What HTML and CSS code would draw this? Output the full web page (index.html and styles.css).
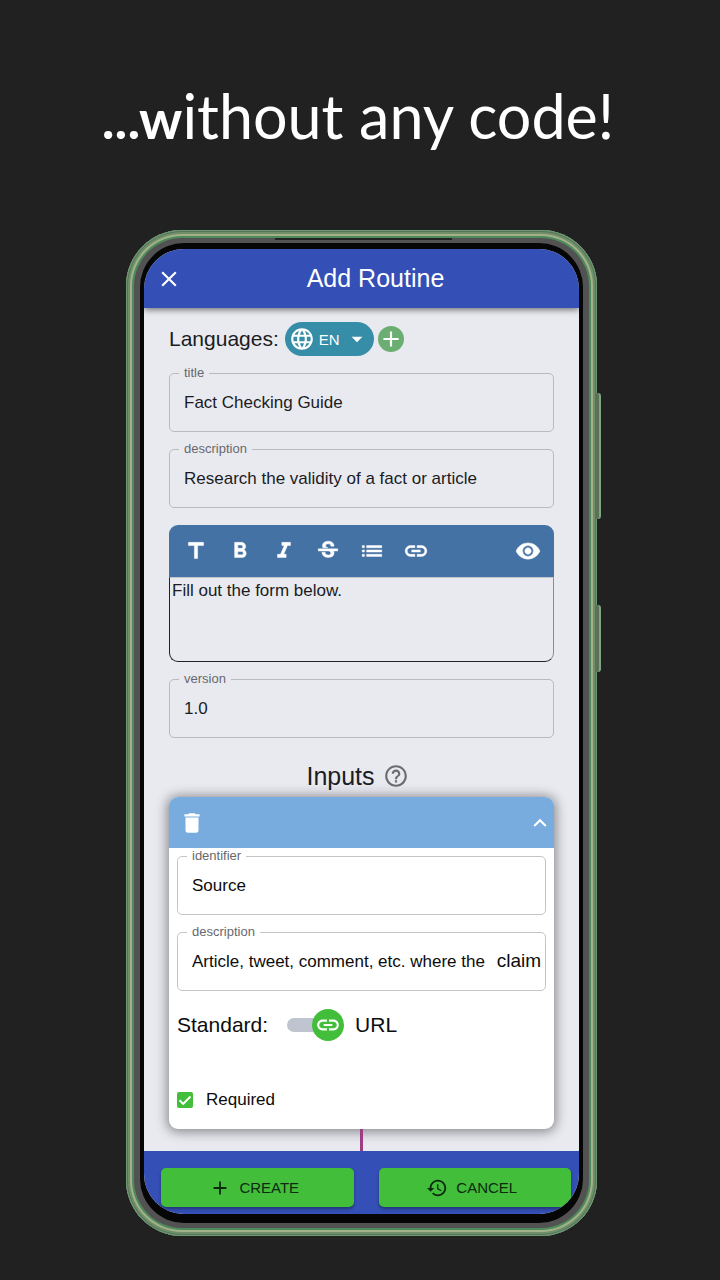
FILE: index.html
```html
<!DOCTYPE html>
<html lang="en">
<head>
<meta charset="utf-8">
<meta name="viewport" content="width=device-width, initial-scale=1">
<title>Add Routine</title>
<link rel="stylesheet" href="styles.css">
</head>
<body>
<h1 class="headline"><b>...w</b>ithout any code!</h1>
<div class="phone">
  <span class="side-key key-volume"></span>
  <span class="side-key key-power"></span>
  <div class="rim">
    <span class="speaker"></span>
    <div class="bezel">
      <main class="screen">
        <header class="topbar">
          <button class="icon-btn" type="button" aria-label="Close">
            <svg class="icon" viewBox="0 0 24 24"><path d="M19 6.41 17.59 5 12 10.59 6.41 5 5 6.41 10.59 12 5 17.59 6.41 19 12 13.41 17.59 19 19 17.59 13.41 12z"/></svg>
          </button>
          <h2 class="topbar-title">Add Routine</h2>
        </header>

        <form class="content">
          <div class="languages">
            <span class="large-text">Languages:</span>
            <button class="lang-pill" type="button">
              <svg class="icon" viewBox="0 0 24 24"><path d="M11.99 2C6.47 2 2 6.48 2 12s4.47 10 9.99 10C17.52 22 22 17.52 22 12S17.52 2 11.99 2zm6.93 6h-2.95c-.32-1.25-.78-2.45-1.38-3.56 1.84.63 3.37 1.91 4.33 3.56zM12 4.04c.83 1.2 1.48 2.53 1.91 3.96h-3.82c.43-1.43 1.08-2.76 1.91-3.96zM4.26 14C4.1 13.36 4 12.69 4 12s.1-1.36.26-2h3.38c-.08.66-.14 1.32-.14 2s.06 1.34.14 2H4.26zm.82 2h2.95c.32 1.25.78 2.45 1.38 3.56-1.84-.63-3.37-1.9-4.33-3.56zm2.95-8H5.08c.96-1.66 2.49-2.93 4.33-3.56C8.81 5.55 8.35 6.75 8.03 8zM12 19.96c-.83-1.2-1.48-2.53-1.91-3.96h3.82c-.43 1.43-1.08 2.76-1.91 3.96zM14.34 14H9.66c-.09-.66-.16-1.32-.16-2s.07-1.35.16-2h4.68c.09.65.16 1.32.16 2s-.07 1.34-.16 2zm.25 5.56c.6-1.11 1.06-2.31 1.38-3.56h2.95c-.96 1.65-2.49 2.93-4.33 3.56zM16.36 14c.08-.66.14-1.32.14-2s-.06-1.34-.14-2h3.38c.16.64.26 1.31.26 2s-.1 1.36-.26 2h-3.38z"/></svg>
              <span>EN</span>
              <svg class="icon" viewBox="0 0 24 24"><path d="m7 10 5 5 5-5z"/></svg>
            </button>
            <button class="add-lang" type="button" aria-label="Add language">
              <svg class="icon" viewBox="0 0 24 24"><path d="M19 13h-6v6h-2v-6H5v-2h6V5h2v6h6v2z"/></svg>
            </button>
          </div>

          <fieldset class="field">
            <legend><label for="title">title</label></legend>
            <input id="title" type="text" value="Fact Checking Guide">
          </fieldset>
          <fieldset class="field">
            <legend><label for="description">description</label></legend>
            <input id="description" type="text" value="Research the validity of a fact or article">
          </fieldset>

          <div class="editor">
            <div class="toolbar">
              <button class="icon-btn" type="button" aria-label="Header"><svg class="icon" viewBox="0 0 24 24"><path d="M5 4v3h5.500v12h3V7H19V4z"/></svg></button>
              <button class="icon-btn" type="button" aria-label="Bold"><svg class="icon" viewBox="0 0 24 24"><path d="M15.600 10.790c.97-.67 1.650-1.770 1.650-2.790 0-2.260-1.750-4-4-4H7v14h7.040c2.090 0 3.710-1.700 3.710-3.790 0-1.520-.86-2.820-2.150-3.420zM10 6.500h3c.83 0 1.500.67 1.500 1.500s-.67 1.500-1.500 1.500h-3v-3zm3.500 9H10v-3h3.500c.83 0 1.500.67 1.500 1.500s-.67 1.500-1.500 1.500z"/></svg></button>
              <button class="icon-btn" type="button" aria-label="Italic"><svg class="icon" viewBox="0 0 24 24"><path d="M10 4v3h2.210l-3.420 8H6v3h8v-3h-2.210l3.420-8H18V4z"/></svg></button>
              <button class="icon-btn" type="button" aria-label="Strikethrough"><svg class="icon" viewBox="0 0 24 24"><path d="M6.850 7.080C6.850 4.370 9.450 3 12.240 3c1.640 0 3 .49 3.900 1.280.77.65 1.460 1.730 1.460 3.240h-3.010c0-.31-.05-.59-.15-.85-.29-.86-1.200-1.280-2.250-1.280-1.860 0-2.340 1.020-2.340 1.700 0 .48.25.88.74 1.210.38.25.77.48 1.410.7H7.390c-.21-.34-.54-.89-.54-1.920zM21 12v-2H3v2h9.620c1.150.45 1.960.75 1.960 1.970 0 1-.81 1.670-2.280 1.670-1.540 0-2.930-.54-2.930-2.510H6.400c0 .55.08 1.130.24 1.580.81 2.290 3.290 3.300 5.670 3.300 2.270 0 5.300-.89 5.300-4.050 0-.3-.01-1.160-.48-1.940H21V12z"/></svg></button>
              <button class="icon-btn" type="button" aria-label="List"><svg class="icon" viewBox="0 0 24 24"><path d="M3 13h2v-2H3v2zm0 4h2v-2H3v2zm0-8h2V7H3v2zm4 4h14v-2H7v2zm0 4h14v-2H7v2zM7 7v2h14V7H7z"/></svg></button>
              <button class="icon-btn" type="button" aria-label="Link"><svg class="icon" viewBox="0 0 24 24"><path d="M3.900 12c0-1.710 1.390-3.100 3.100-3.100h4V7H7c-2.760 0-5 2.240-5 5s2.240 5 5 5h4v-1.900H7c-1.710 0-3.100-1.390-3.100-3.100zM8 13h8v-2H8v2zm9-6h-4v1.900h4c1.710 0 3.100 1.390 3.100 3.100s-1.390 3.100-3.100 3.100h-4V17h4c2.760 0 5-2.240 5-5s-2.240-5-5-5z"/></svg></button>
              <button class="icon-btn preview" type="button" aria-label="Preview"><svg class="icon" viewBox="0 0 24 24"><path d="M12 4.500C7 4.500 2.730 7.610 1 12c1.730 4.390 6 7.500 11 7.500s9.270-3.110 11-7.500c-1.730-4.390-6-7.500-11-7.500zM12 17c-2.760 0-5-2.240-5-5s2.240-5 5-5 5 2.240 5 5-2.240 5-5 5zm0-8c-1.660 0-3 1.340-3 3s1.340 3 3 3 3-1.340 3-3-1.340-3-3-3z"/></svg></button>
            </div>
            <textarea class="editor-text" aria-label="Instructions">Fill out the form below.</textarea>
          </div>

          <fieldset class="field">
            <legend><label for="version">version</label></legend>
            <input id="version" type="text" value="1.0">
          </fieldset>

          <div class="section-head">
            <h3>Inputs</h3>
            <button class="icon-btn help" type="button" aria-label="Help">
              <svg class="icon" viewBox="0 0 24 24"><path d="M11 18h2v-2h-2v2zm1-16C6.480 2 2 6.480 2 12s4.480 10 10 10 10-4.480 10-10S17.520 2 12 2zm0 18c-4.410 0-8-3.590-8-8s3.590-8 8-8 8 3.590 8 8-3.590 8-8 8zm0-14c-2.210 0-4 1.790-4 4h2c0-1.100.9-2 2-2s2 .9 2 2c0 2-3 1.750-3 5h2c0-2.250 3-2.500 3-5 0-2.210-1.790-4-4-4z"/></svg>
            </button>
          </div>

          <section class="card">
            <div class="card-head">
              <button class="icon-btn" type="button" aria-label="Delete"><svg class="icon" viewBox="0 0 24 24"><path d="M6 19c0 1.100.9 2 2 2h8c1.100 0 2-.9 2-2V7H6v12zM19 4h-3.500l-1-1h-5l-1 1H5v2h14V4z"/></svg></button>
              <button class="icon-btn" type="button" aria-label="Collapse"><svg class="icon" viewBox="0 0 24 24"><path d="m12 8-6 6 1.410 1.410L12 10.830l4.590 4.580L18 14z"/></svg></button>
            </div>
            <div class="card-body">
              <fieldset class="field">
                <legend><label for="identifier">identifier</label></legend>
                <input id="identifier" type="text" value="Source">
              </fieldset>
              <fieldset class="field">
                <legend><label for="input-description">description</label></legend>
                <div class="field-row">
                  <input id="input-description" type="text" value="Article, tweet, comment, etc. where the">
                  <span class="suffix">claim</span>
                </div>
              </fieldset>
              <div class="standard">
                <label class="large-text" for="standard">Standard:</label>
                <span class="switch">
                  <input id="standard" type="checkbox" role="switch" checked>
                  <span class="thumb"><svg class="icon" viewBox="0 0 24 24"><path d="M3.900 12c0-1.710 1.390-3.100 3.100-3.100h4V7H7c-2.760 0-5 2.240-5 5s2.240 5 5 5h4v-1.900H7c-1.710 0-3.100-1.390-3.100-3.100zM8 13h8v-2H8v2zm9-6h-4v1.900h4c1.710 0 3.100 1.390 3.100 3.100s-1.390 3.100-3.100 3.100h-4V17h4c2.760 0 5-2.240 5-5s-2.240-5-5-5z"/></svg></span>
                </span>
                <span class="large-text">URL</span>
              </div>
              <label class="required">
                <span class="check">
                  <input type="checkbox" checked>
                  <svg class="tick" viewBox="0 0 16 16"><path d="m2.500 8.200 3.700 3.700 7.300-7.400"/></svg>
                </span>
                Required
              </label>
            </div>
          </section>
          <div class="connector"></div>
        </form>

        <footer class="actions">
          <button class="action" type="button">
            <svg class="icon-small" viewBox="0 0 24 24"><path d="M19 13h-6v6h-2v-6H5v-2h6V5h2v6h6v2z"/></svg>
            CREATE
          </button>
          <button class="action" type="button">
            <svg class="icon-small" viewBox="0 0 24 24"><path d="M13 3c-4.970 0-9 4.030-9 9H1l3.890 3.890.07.14L9 12H6c0-3.870 3.130-7 7-7s7 3.130 7 7-3.130 7-7 7c-1.930 0-3.680-.79-4.940-2.060l-1.420 1.420C8.270 19.990 10.510 21 13 21c4.970 0 9-4.030 9-9s-4.030-9-9-9zm-1 5v5l4.280 2.540.72-1.210-3.500-2.080V8H12z"/></svg>
            CANCEL
          </button>
        </footer>
      </main>
    </div>
  </div>
</div>
</body>
</html>
```
FILE: styles.css
```css
* {
  box-sizing: border-box;
}

body {
  margin: 0;
  min-height: 100vh;
  background: #212121;
  color: #1b1c1f;
  font-family: "Liberation Sans", Arial, sans-serif;
  font-size: 17px;
}

button,
input,
textarea {
  margin: 0;
  font: inherit;
  color: inherit;
}

button {
  display: flex;
  align-items: center;
  justify-content: center;
  padding: 0;
  border: 0;
  background: none;
  cursor: pointer;
}

.headline {
  margin: 0;
  padding: 76px 4px 74px 0;
  color: #fff;
  font-family: Lato, sans-serif;
  font-size: 61px;
  font-weight: 400;
  line-height: 80px;
  text-align: center;
}

.headline b {
  font-size: 54px;
  line-height: 1;
}

.icon {
  display: block;
  flex: none;
  width: 26px;
  height: 26px;
  fill: currentColor;
}

.icon-small {
  width: 22px;
  height: 22px;
  fill: currentColor;
}

.large-text {
  font-size: 21px;
}

/* Device frame */

.phone {
  position: relative;
  margin: 0 123px 44px 126px;
  padding: 8px;
  border-radius: 56px;
  background: #4f8a5c;
  box-shadow:
    inset 0 0 0 1px #6c9a72,
    inset 0 0 0 2px #57735a,
    inset 0 0 0 4px #6f8f6b,
    inset 0 0 0 6px #a3b189;
}

.side-key {
  position: absolute;
  right: -4px;
  width: 5px;
  border-right: 2px solid #7ea67f;
  border-radius: 0 3px 3px 0;
  background: #5c6f58;
}

.key-volume {
  top: 163px;
  height: 126px;
}

.key-power {
  top: 375px;
  height: 67px;
}

.rim {
  position: relative;
  padding: 5px 6px;
  border-radius: 48px;
  background: #525252;
}

.speaker {
  position: absolute;
  top: 0;
  left: 31%;
  width: 39%;
  height: 2px;
  background: #222;
}

.bezel {
  padding: 6px 4px 9px;
  border-radius: 44px;
  background: #060606;
}

.screen {
  overflow: hidden;
  border-radius: 40px;
  background: #e9eaf0;
}

/* Top bar */

.topbar {
  position: relative;
  display: grid;
  grid-template-columns: 26px 1fr;
  align-items: center;
  height: 59px;
  padding: 0 10px 0 12px;
  background: #344fb5;
  color: #fff;
  box-shadow: 0 2px 6px rgba(0, 0, 0, 0.5);
}

.topbar-title {
  margin: 0;
  font-size: 25px;
  font-weight: 400;
  text-align: center;
}

/* Form */

.content {
  display: flex;
  flex-direction: column;
  gap: 9px;
  padding: 14px 25px 0;
}

.languages {
  display: flex;
  align-items: center;
  gap: 4px;
  height: 34px;
}

.lang-pill {
  gap: 4px;
  height: 34px;
  margin-left: 2px;
  padding: 0 4px;
  border-radius: 17px;
  background: #368da7;
  color: #fff;
  font-size: 15px;
}

.add-lang {
  border-radius: 50%;
  background: #6bae72;
  color: #fff;
}

.field {
  min-width: 0;
  height: 67px;
  margin: 0;
  padding: 0 4px 0 9px;
  border: 1px solid #b9babf;
  border-radius: 5px;
}

.field legend {
  padding: 0 5px;
  color: #67686c;
  font-size: 13px;
  line-height: 16px;
}

.field label {
  display: block;
}

.field input {
  display: block;
  width: 100%;
  height: 44px;
  padding: 0 0 0 5px;
  border: 0;
  outline: 0;
  background: none;
}

.field-row {
  display: flex;
  align-items: baseline;
}

.field-row input {
  flex: 1;
  min-width: 0;
}

.suffix {
  font-size: 19px;
}

.editor {
  margin-top: 8px;
}

.toolbar {
  display: flex;
  align-items: center;
  gap: 18px;
  height: 52px;
  padding: 0 13px 0 14px;
  border-radius: 9px 9px 0 0;
  background: #4472a4;
  color: #fff;
}

.toolbar .icon {
  stroke: currentColor;
  stroke-width: 0.4;
}

.preview {
  margin-left: auto;
}

.editor-text {
  display: block;
  width: 100%;
  height: 85px;
  padding: 3px 2px;
  border: 1px solid #222;
  border-top-color: #c4c4cc;
  border-right-color: #8c8c90;
  border-radius: 0 0 9px 9px;
  outline: 0;
  background: none;
  line-height: 20px;
  resize: none;
}

.section-head {
  display: flex;
  align-items: center;
  justify-content: center;
  gap: 8px;
  height: 40px;
  margin-top: 9px;
  padding-right: 8px;
}

.section-head h3 {
  margin: 0;
  font-size: 25px;
  font-weight: 400;
}

.help {
  color: #6b6c70;
}

/* Input card */

.card {
  margin-top: -8px;
  border-radius: 9px;
  background: #fff;
  color: #0c0c0c;
  box-shadow: 0 1px 12px 2px rgba(0, 0, 0, 0.42);
}

.card-head {
  display: flex;
  align-items: center;
  justify-content: space-between;
  height: 51px;
  padding: 0 1px 0 10px;
  border-radius: 9px 9px 0 0;
  background: #78acdf;
  color: #fff;
}

.card-body {
  display: flex;
  flex-direction: column;
  gap: 9px;
  padding: 0 8px 12px;
}

.card-body .field {
  border-color: #c4c4c4;
}

.standard {
  display: flex;
  align-items: center;
  height: 34px;
  margin-top: 8px;
}

.switch {
  position: relative;
  display: flex;
  align-items: center;
  width: 57px;
  height: 32px;
  margin: 0 11px 0 19px;
}

.switch input {
  appearance: none;
  width: 50px;
  height: 14px;
  border-radius: 7px;
  background: #bfc5d0;
}

.thumb {
  position: absolute;
  right: 0;
  display: grid;
  place-items: center;
  width: 32px;
  height: 32px;
  border-radius: 50%;
  background: #42be3a;
  color: #fff;
  pointer-events: none;
}

.required {
  display: flex;
  align-items: center;
  gap: 13px;
  height: 34px;
  margin-top: 32px;
}

.check {
  position: relative;
  display: flex;
  width: 16px;
  height: 16px;
}

.check input {
  appearance: none;
  width: 16px;
  height: 16px;
  border-radius: 2px;
  background: #42be3a;
}

.tick {
  position: absolute;
  inset: 0;
  fill: none;
  stroke: #fff;
  stroke-width: 2;
  pointer-events: none;
}

.connector {
  align-self: center;
  width: 3px;
  height: 22px;
  margin-top: -9px;
  background: #9f3d84;
}

/* Bottom actions */

.actions {
  position: relative;
  display: grid;
  grid-template-columns: 1fr 1fr;
  gap: 25px;
  padding: 17px 8px 7px 17px;
  background: #344fb5;
}

.action {
  gap: 8px;
  height: 39px;
  padding-right: 6px;
  border-radius: 5px;
  background: #42be3a;
  box-shadow: 0 2px 3px rgba(0, 0, 0, 0.35);
  color: #0c2a10;
  font-size: 15px;
}
```
